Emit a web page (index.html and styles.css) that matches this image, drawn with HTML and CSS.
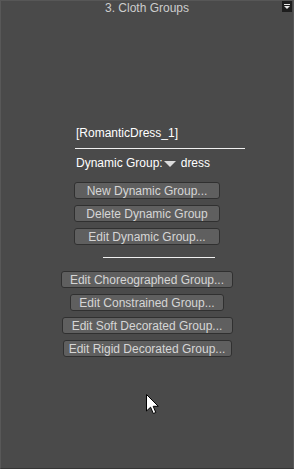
FILE: index.html
```html
<!DOCTYPE html>
<html lang="en">
<head>
  <meta charset="UTF-8">
  <title>Cloth Groups</title>
  <link rel="stylesheet" href="styles.css">
</head>
<body>

<div class="panel">
  <div class="title-bar">
    <span></span>
    <span class="title">3. Cloth Groups</span>
    <span class="menu-icon">
      <svg width="10" height="11" viewBox="0 0 10 11">
        <rect x="0" y="0" width="10" height="11" fill="#1e1e1e"/>
        <rect x="2" y="3" width="6" height="1" fill="#e8e8e8"/>
        <path d="M2 5 L8 5 L5 8 Z" fill="#e8e8e8"/>
      </svg>
    </span>
  </div>

  <div class="info">
    <div class="figure-name">[RomanticDress_1]</div>
    <div class="rule"></div>
    <div class="group-row">
      <span>Dynamic Group:</span>
      <span class="drop-arrow"></span>
      <span class="group-value">dress</span>
    </div>
  </div>

  <div class="button-list">
    <button class="panel-button btn-dynamic">New Dynamic Group...</button>
    <button class="panel-button btn-dynamic">Delete Dynamic Group</button>
    <button class="panel-button btn-dynamic">Edit Dynamic Group...</button>
  </div>

  <div class="separator"></div>

  <div class="button-list">
    <button class="panel-button btn-choreo">Edit Choreographed Group...</button>
    <button class="panel-button btn-constrained">Edit Constrained Group...</button>
    <button class="panel-button btn-soft">Edit Soft Decorated Group...</button>
    <button class="panel-button btn-rigid">Edit Rigid Decorated Group...</button>
  </div>

  <!-- mouse pointer sitting over the panel -->
  <svg class="cursor" width="13" height="21" viewBox="0 0 13 21">
    <path d="M0.5 0.5 L0.5 17 L4.6 13.2 L7.3 19.5 L9.8 18.5 L7.2 12.3 L12.3 12.3 Z" fill="#fff" stroke="#000" stroke-width="1" stroke-linejoin="miter"/>
  </svg>
</div>

</body>
</html>
```

FILE: styles.css
```css
* {
  margin: 0;
  padding: 0;
  box-sizing: border-box;
}

html, body {
  width: 294px;
  height: 469px;
  background: #4a4a4a;
  overflow: hidden;
}

.panel {
  position: relative;
  width: 294px;
  height: 469px;
  background: #4a4a4a;
  border: 1px solid;
  border-color: #575757 #585858 #363636 #585858;
  font-family: "Liberation Sans", Arial, sans-serif;
  font-size: 12px;
  line-height: 14px;
  color: #ffffff;
}

.title-bar {
  display: grid;
  grid-template-columns: 1fr auto 1fr;
  height: 14px;
  color: #cdcdcd;
}

.menu-icon {
  justify-self: end;
  margin-right: 1px;
  height: 11px;
}

.menu-icon svg {
  display: block;
}

.info {
  margin-left: 74px;
  margin-top: 111px;
  width: 170px;
}

.figure-name {
  padding-left: 1px;
}

.rule {
  height: 1px;
  background: #f0f0f0;
  margin-top: 8px;
}

.group-row {
  display: flex;
  align-items: center;
  margin-top: 7px;
  padding-left: 1px;
}

.drop-arrow {
  width: 0;
  height: 0;
  margin-left: 1px;
  margin-top: 1px;
  border-left: 6px solid transparent;
  border-right: 6px solid transparent;
  border-top: 6px solid #dcdcdc;
}

.group-value {
  margin-left: 5px;
}

.button-list {
  display: flex;
  flex-direction: column;
  align-items: center;
  gap: 6px;
}

.info + .button-list {
  margin-top: 12px;
}

.panel-button {
  height: 17px;
  background: #5f5f5f;
  border: 1px solid #303030;
  border-radius: 3px;
  color: #d6d6d6;
  font-family: "Liberation Sans", Arial, sans-serif;
  font-size: 12px;
  line-height: 14px;
  text-align: center;
  white-space: nowrap;
  padding: 0;
}

.btn-dynamic { width: 146px; }
.btn-choreo { width: 172px; }
.btn-constrained { width: 154px; }
.btn-soft { width: 171px; }
.btn-rigid { width: 169px; }

.separator {
  width: 112px;
  height: 1px;
  background: #f0f0f0;
  margin: 12px 0 13px 102px;
}

.cursor {
  position: absolute;
  left: 145px;
  top: 393px;
}
```
